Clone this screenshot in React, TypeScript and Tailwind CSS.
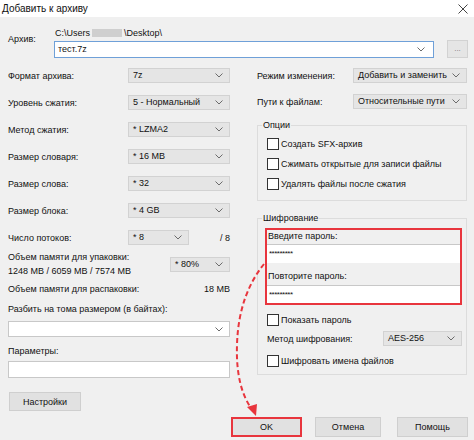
import React from 'react';

const Chevron: React.FC = () => (
  <svg width="8" height="5" viewBox="0 0 8 5" className="shrink-0">
    <path d="M0.5 0.5 L4 4 L7.5 0.5" fill="none" stroke="#6b6b6b" strokeWidth="1" />
  </svg>
);

const Select: React.FC<{ value: string; w: string; white?: boolean; h?: string }> = ({ value, w, white, h }) => (
  <div
    className={`${w} ${h ?? 'h-[15px]'} shrink-0 flex items-center justify-between pl-[4px] pr-[6px] border ${
      white ? 'bg-white border-[#c8c8c8]' : 'bg-[#e5e5e5] border-[#d2d2d2]'
    }`}
  >
    <span className="leading-none">{value}</span>
    <Chevron />
  </div>
);

const Checkbox: React.FC<{ label: string }> = ({ label }) => (
  <div className="flex items-center gap-[2px]">
    <div className="w-[12px] h-[12px] border border-[#333] bg-white shrink-0" />
    <span>{label}</span>
  </div>
);

const SelectRow: React.FC<{ label: string; value: string }> = ({ label, value }) => (
  <div className="flex items-center justify-between h-[15px] mb-[12px]">
    <span>{label}</span>
    <Select value={value} w="w-[102px]" />
  </div>
);

export default function App() {
  return (
    <div
      className="relative w-[474px] h-[440px] overflow-hidden bg-[#f0f0f0] text-[9px] leading-[12px] text-[#111]"
      style={{ fontFamily: '"Liberation Sans", Arial, sans-serif' }}
    >
      {/* title bar */}
      <div className="h-[17px] bg-white flex items-center justify-between pl-[2px] pr-[6px]">
        <span className="text-[10px]">Добавить к архиву</span>
        <svg width="10" height="10" viewBox="0 0 10 10">
          <path d="M0.5 0.5 L9.5 9.5 M9.5 0.5 L0.5 9.5" stroke="#444" strokeWidth="1" />
        </svg>
      </div>

      {/* archive path */}
      <div className="flex pl-[8px] pt-[10px]">
        <div className="w-[46px] pt-[6px]">Архив:</div>
        <div className="flex flex-col">
          <div className="h-[12px] flex items-center pl-[1px]">
            C:\Users
            <span className="inline-block w-[30px] h-[8px] bg-[#cfcfcf] mx-[2px]" />
            \Desktop\
          </div>
          <div className="flex items-center gap-[13px] mt-[1px]">
            <div className="w-[380px] h-[17px] bg-white border border-[#6fa0d8] flex items-center justify-between pl-[3px] pr-[8px]">
              <span>тест.7z</span>
              <Chevron />
            </div>
            <div className="w-[21px] h-[18px] bg-[#e5e5e5] border border-[#d2d2d2] flex items-center justify-center text-[8px] text-[#777]">
              ...
            </div>
          </div>
        </div>
      </div>

      {/* main columns */}
      <div className="flex pl-[8px] gap-[27px] mt-[10px] items-start">
        {/* left column */}
        <div className="w-[222px] flex flex-col">
          <SelectRow label="Формат архива:" value="7z" />
          <SelectRow label="Уровень сжатия:" value="5 - Нормальный" />
          <SelectRow label="Метод сжатия:" value="* LZMA2" />
          <SelectRow label="Размер словаря:" value="* 16 MB" />
          <SelectRow label="Размер слова:" value="* 32" />
          <SelectRow label="Размер блока:" value="* 4 GB" />
          <div className="flex items-center h-[15px]">
            <span className="w-[120px]">Число потоков:</span>
            <Select value="* 8" w="w-[61px]" />
            <span className="ml-auto">/ 8</span>
          </div>

          <div className="flex items-center justify-between mt-[5px]">
            <div className="leading-[14px]">
              <div>Объем памяти для упаковки:</div>
              <div>1248 MB / 6059 MB / 7574 MB</div>
            </div>
            <Select value="* 80%" w="w-[60px]" />
          </div>

          <div className="flex justify-between mt-[5px]">
            <span>Объем памяти для распаковки:</span>
            <span>18 MB</span>
          </div>

          <div className="mt-[8px]">Разбить на тома размером (в байтах):</div>
          <div className="mt-[6px]">
            <Select value="" w="w-[222px]" h="h-[16px]" white />
          </div>

          <div className="mt-[8px]">Параметры:</div>
          <div className="mt-[4px] w-[222px] h-[17px] bg-white border border-[#c8c8c8]" />

          <div className="mt-[14px] ml-[1px] w-[72px] h-[19px] bg-[#e1e1e1] border border-[#cfcfcf] flex items-center justify-center">
            Настройки
          </div>
        </div>

        {/* right column */}
        <div className="w-[210px] flex flex-col">
          <div className="flex items-center justify-between h-[15px] mb-[11px]">
            <span>Режим изменения:</span>
            <Select value="Добавить и заменить" w="w-[114px]" />
          </div>
          <div className="flex items-center justify-between h-[15px]">
            <span>Пути к файлам:</span>
            <Select value="Относительные пути" w="w-[114px]" />
          </div>

          <fieldset className="mt-[10px] border border-[#dcdcdc]">
            <legend className="ml-[4px] px-[1px]">Опции</legend>
            <div className="pl-[9px] pt-[3px] pb-[6px] flex flex-col">
              <div className="h-[20px] flex items-center"><Checkbox label="Создать SFX-архив" /></div>
              <div className="h-[20px] flex items-center"><Checkbox label="Сжимать открытые для записи файлы" /></div>
              <div className="h-[20px] flex items-center"><Checkbox label="Удалять файлы после сжатия" /></div>
            </div>
          </fieldset>

          <fieldset className="mt-[11px] border border-[#dcdcdc]">
            <legend className="ml-[4px] px-[1px]">Шифрование</legend>
            <div className="pl-[9px] pr-[4px] pt-[4px] pb-[5px] flex flex-col">
              <div className="ml-[-2px] border-2 border-[#e8353d] flex flex-col">
                <div className="h-[12px] pl-[1px]">Введите пароль:</div>
                <div className="mt-[2px] h-[19px] bg-white border-t border-[#c8c8c8] flex items-center pl-[2px] text-[8px] tracking-[-0.5px]">
                  *********
                </div>
                <div className="mt-[7px] h-[12px] pl-[1px]">Повторите пароль:</div>
                <div className="mt-[3px] h-[18px] bg-white border-t border-[#c8c8c8] flex items-center pl-[2px] text-[8px] tracking-[-0.5px]">
                  *********
                </div>
              </div>
              <div className="mt-[7px] h-[16px] flex items-center"><Checkbox label="Показать пароль" /></div>
              <div className="mt-[3px] h-[15px] flex items-center justify-between">
                <span>Метод шифрования:</span>
                <Select value="AES-256" w="w-[79px]" />
              </div>
              <div className="mt-[7px] h-[16px] flex items-center"><Checkbox label="Шифровать имена файлов" /></div>
            </div>
          </fieldset>
        </div>
      </div>

      {/* bottom buttons */}
      <div className="flex justify-end pr-[6px] mt-[6px]">
        <div className="w-[71px] h-[20px] bg-[#e1e1e1] border-2 border-[#e8353d] flex items-center justify-center">
          OK
        </div>
        <div className="ml-[13px] w-[66px] h-[20px] bg-[#e1e1e1] border border-[#cfcfcf] flex items-center justify-center">
          Отмена
        </div>
        <div className="ml-[16px] w-[71px] h-[20px] bg-[#e1e1e1] border border-[#cfcfcf] flex items-center justify-center">
          Помощь
        </div>
      </div>

      {/* dashed arrow overlay */}
      <svg className="absolute inset-0 pointer-events-none" width="474" height="440" viewBox="0 0 474 440">
        <path
          d="M264 264 C248 284 238 310 237 345 C236 375 242 395 251 408"
          fill="none"
          stroke="#e8353d"
          strokeWidth="2"
          strokeDasharray="5 3"
        />
        <path d="M247 407 L256 416 L257 404 Z" fill="#e8353d" />
      </svg>
    </div>
  );
}
